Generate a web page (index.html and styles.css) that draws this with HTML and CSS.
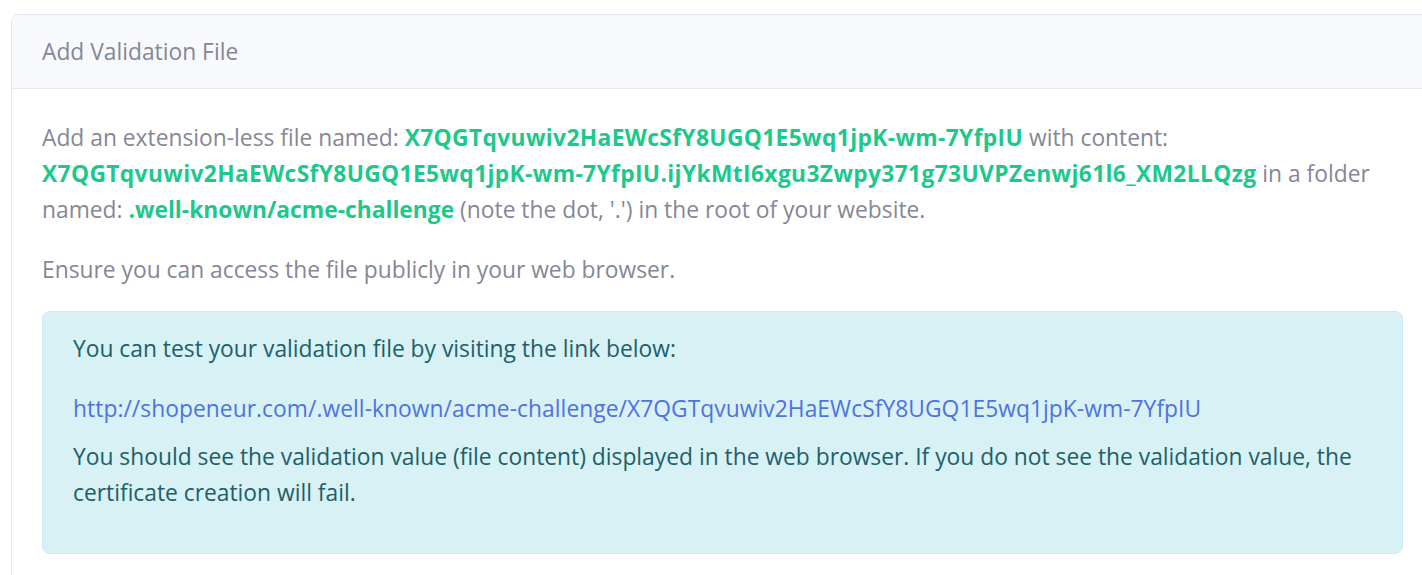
FILE: index.html
```html
<!DOCTYPE html>
<html lang="en">
<head>
<meta charset="utf-8">
<title>Add Validation File</title>
<link rel="stylesheet" href="styles.css">
</head>
<body>
<div class="page">
  <div class="card">
    <div class="card-header">Add Validation File</div>
    <div class="card-body">
      <p>Add an extension-less file named: <strong class="ok">X7QGTqvuwiv2HaEWcSfY8UGQ1E5wq1jpK-wm-7YfpIU</strong> with content: <strong class="ok">X7QGTqvuwiv2HaEWcSfY8UGQ1E5wq1jpK-wm-7YfpIU.ijYkMtI6xgu3Zwpy371g73UVPZenwj61l6_XM2LLQzg</strong> in a folder named: <strong class="ok tight">.well-known/acme-challenge</strong> (note the dot, '.') in the root of your website.</p>
      <p class="note">Ensure you can access the file publicly in your web browser.</p>
      <div class="alert">
        <p>You can test your validation file by visiting the link below:</p>
        <p class="link-row"><a href="#">http://shopeneur.com/.well-known/acme-challenge/X7QGTqvuwiv2HaEWcSfY8UGQ1E5wq1jpK-wm-7YfpIU</a></p>
        <p>You should see the validation value (file content) displayed in the web browser. If you do not see the validation value, the certificate creation will fail.</p>
      </div>
    </div>
  </div>
</div>
</body>
</html>
```
FILE: styles.css
```css
html, body {
  margin: 0;
  padding: 0;
  overflow: hidden;
  background: #fff;
}
body {
  font-family: "Open Sans", "Noto Sans", sans-serif;
  font-size: 22.8px;
  line-height: 36px;
  color: #858796;
}
.page {
  padding: 14px 0 0 11px;
  width: 1423px;
}
.card {
  border: 1px solid #e3e6f0;
  border-radius: 8px;
  background: #fff;
}
.card-header {
  background: #f8f9fc;
  border-bottom: 1px solid #e3e6f0;
  border-radius: 8px 8px 0 0;
  padding: 19px 30px 18px;
}
.card-body {
  padding: 31px 30px 29px;
}
p {
  margin: 0 0 24px;
}
.card-body .note {
  margin-bottom: 23px;
}
.ok {
  color: #1cc88a;
  font-weight: 700;
  letter-spacing: 0.35px;
}
.ok.tight {
  letter-spacing: 0;
}
.alert {
  background: #d7f1f5;
  border: 1px solid #c7ebf1;
  border-radius: 8px;
  color: #1c606a;
  padding: 19px 30px 18px;
}
.alert .link-row {
  margin-bottom: 12px;
}
.alert a {
  color: #4e73df;
  text-decoration: none;
  letter-spacing: 0.05px;
}
```
